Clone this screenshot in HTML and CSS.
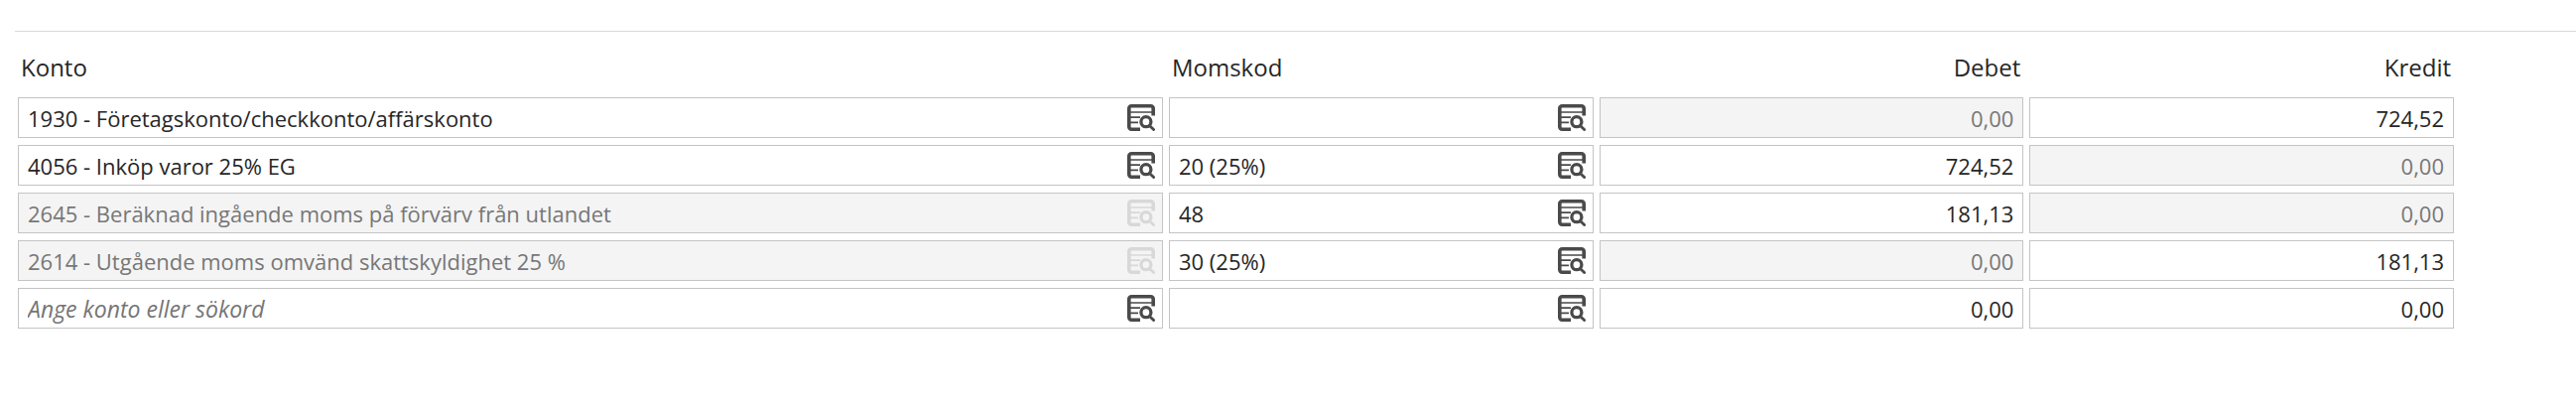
FILE: index.html
```
<!DOCTYPE html>
<html lang="sv">
<head>
    <meta charset="UTF-8">
    <meta name="viewport" content="width=device-width, initial-scale=1.0">
    <title>Kontering</title>
    <link rel="stylesheet" href="styles.css">
</head>
<body>
    <!-- Shared lookup icon -->
    <svg class="sprite" aria-hidden="true">
        <symbol id="lookup" viewBox="0 0 28 27">
            <path d="M13 25.2H4.2a2.4 2.4 0 0 1-2.4-2.4V4.2a2.4 2.4 0 0 1 2.4-2.4H23.8a2.4 2.4 0 0 1 2.4 2.4V11.5" fill="none" stroke="currentColor" stroke-width="3.6"/>
            <path d="M3 8H26M3 13.2H13M3 18.3H11" fill="none" stroke="currentColor" stroke-width="1.7"/>
            <circle cx="18.9" cy="17.7" r="5" fill="none" stroke="currentColor" stroke-width="3.3"/>
            <path d="M22.4 21.4L26.6 25.6" fill="none" stroke="currentColor" stroke-width="2.8" stroke-linecap="round"/>
        </symbol>
    </svg>
    <form class="voucher">
        <table class="rows">
            <thead>
                <tr>
                    <th class="col-account" id="konto">Konto</th>
                    <th id="momskod">Momskod</th>
                    <th class="amount" id="debet">Debet</th>
                    <th class="amount" id="kredit">Kredit</th>
                </tr>
            </thead>
            <tbody>
                <tr>
                    <td><div class="field"><input type="text" aria-labelledby="konto" value="1930 - Företagskonto/checkkonto/affärskonto"><button type="button" aria-label="Sök konto"><svg><use href="#lookup"/></svg></button></div></td>
                    <td><div class="field"><input type="text" aria-labelledby="momskod"><button type="button" aria-label="Sök momskod"><svg><use href="#lookup"/></svg></button></div></td>
                    <td><div class="field amount disabled"><input type="text" aria-labelledby="debet" value="0,00" disabled></div></td>
                    <td><div class="field amount"><input type="text" aria-labelledby="kredit" value="724,52"></div></td>
                </tr>
                <tr>
                    <td><div class="field"><input type="text" aria-labelledby="konto" value="4056 - Inköp varor 25% EG"><button type="button" aria-label="Sök konto"><svg><use href="#lookup"/></svg></button></div></td>
                    <td><div class="field"><input type="text" aria-labelledby="momskod" value="20 (25%)"><button type="button" aria-label="Sök momskod"><svg><use href="#lookup"/></svg></button></div></td>
                    <td><div class="field amount"><input type="text" aria-labelledby="debet" value="724,52"></div></td>
                    <td><div class="field amount disabled"><input type="text" aria-labelledby="kredit" value="0,00" disabled></div></td>
                </tr>
                <tr>
                    <td><div class="field disabled"><input type="text" aria-labelledby="konto" value="2645 - Beräknad ingående moms på förvärv från utlandet" disabled><button type="button" aria-label="Sök konto" disabled><svg><use href="#lookup"/></svg></button></div></td>
                    <td><div class="field"><input type="text" aria-labelledby="momskod" value="48"><button type="button" aria-label="Sök momskod"><svg><use href="#lookup"/></svg></button></div></td>
                    <td><div class="field amount"><input type="text" aria-labelledby="debet" value="181,13"></div></td>
                    <td><div class="field amount disabled"><input type="text" aria-labelledby="kredit" value="0,00" disabled></div></td>
                </tr>
                <tr>
                    <td><div class="field disabled"><input type="text" aria-labelledby="konto" value="2614 - Utgående moms omvänd skattskyldighet 25 %" disabled><button type="button" aria-label="Sök konto" disabled><svg><use href="#lookup"/></svg></button></div></td>
                    <td><div class="field"><input type="text" aria-labelledby="momskod" value="30 (25%)"><button type="button" aria-label="Sök momskod"><svg><use href="#lookup"/></svg></button></div></td>
                    <td><div class="field amount disabled"><input type="text" aria-labelledby="debet" value="0,00" disabled></div></td>
                    <td><div class="field amount"><input type="text" aria-labelledby="kredit" value="181,13"></div></td>
                </tr>
                <tr>
                    <td><div class="field"><input type="text" aria-labelledby="konto" placeholder="Ange konto eller sökord"><button type="button" aria-label="Sök konto"><svg><use href="#lookup"/></svg></button></div></td>
                    <td><div class="field"><input type="text" aria-labelledby="momskod"><button type="button" aria-label="Sök momskod"><svg><use href="#lookup"/></svg></button></div></td>
                    <td><div class="field amount"><input type="text" aria-labelledby="debet" value="0,00"></div></td>
                    <td><div class="field amount"><input type="text" aria-labelledby="kredit" value="0,00"></div></td>
                </tr>
            </tbody>
        </table>
    </form>
</body>
</html>
```
FILE: styles.css
```
* {
    margin: 0;
    padding: 0;
    box-sizing: border-box;
}
body {
    background: #fff;
    color: #262626;
    font-family: 'Open Sans', sans-serif;
    font-size: 22px;
}
.sprite {
    display: none;
}
.voucher {
    margin: 31px 0 0 15px;
    padding-top: 12px;
    border-top: 1px solid #dadada;
}
.rows {
    width: calc(100% - 114px);
    margin-left: -3px;
    table-layout: fixed;
    border-collapse: separate;
    border-spacing: 6px 7px;
}
.rows th {
    width: 17.55%;
    height: 40px;
    padding: 0 3px;
    font-size: 24px;
    font-weight: normal;
    line-height: 34px;
    text-align: left;
    vertical-align: top;
}
.rows th.col-account {
    width: auto;
}
.rows th.amount {
    text-align: right;
}
.field {
    display: flex;
    align-items: center;
    height: 41px;
    border: 1px solid #c4c4c4;
    background: #fff;
}
.field input {
    flex: 1;
    min-width: 0;
    height: 100%;
    padding: 0 9px;
    border: 0;
    outline: 0;
    background: none;
    color: inherit;
    font: inherit;
}
.field input::placeholder {
    color: #757575;
    font-size: 23px;
    font-style: italic;
}
.field.amount input {
    text-align: right;
}
.field button {
    width: 28px;
    height: 27px;
    margin-right: 7px;
    border: 0;
    background: none;
    color: #4a4a4a;
    cursor: pointer;
}
.field svg {
    display: block;
    width: 28px;
    height: 27px;
}
.field.disabled {
    background: #f4f4f4;
    color: #777;
}
.field.disabled button {
    color: #d8d8d8;
    cursor: default;
}
```
